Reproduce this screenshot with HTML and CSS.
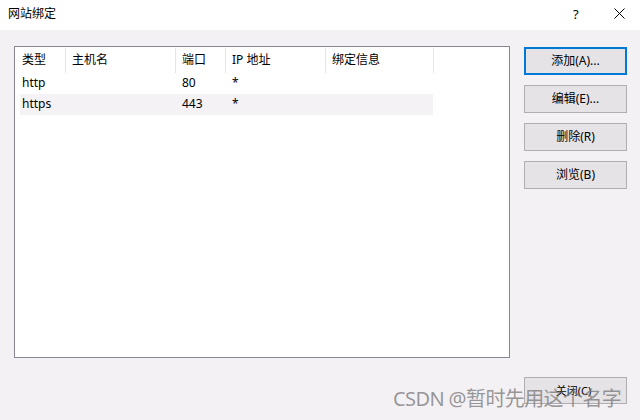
FILE: index.html
```html
<!DOCTYPE html>
<html lang="zh">
<head>
<meta charset="utf-8">
<title>网站绑定</title>
<link rel="stylesheet" href="styles.css">
</head>
<body>
<div class="dialog">
  <div class="titlebar">
    <span class="title">网站绑定</span>
    <span class="help">?</span>
    <span class="close-x">
      <svg width="11" height="11" viewBox="0 0 11 11"><path d="M0.5 0.5 L10.5 10.5 M10.5 0.5 L0.5 10.5" stroke="#000" stroke-width="1" fill="none"/></svg>
    </span>
  </div>
  <div class="content">
    <div class="main">
      <div class="listbox">
        <div class="header">
          <div class="hcell c1">类型</div>
          <div class="hcell c2">主机名</div>
          <div class="hcell c3">端口</div>
          <div class="hcell c4">IP 地址</div>
          <div class="hcell c5">绑定信息</div>
        </div>
        <div class="rows">
          <div class="row">
            <div class="cell r1">http</div>
            <div class="cell r2"></div>
            <div class="cell r3">80</div>
            <div class="cell r4">*</div>
            <div class="cell r5"></div>
          </div>
          <div class="row alt">
            <div class="cell r1">https</div>
            <div class="cell r2"></div>
            <div class="cell r3">443</div>
            <div class="cell r4">*</div>
            <div class="cell r5"></div>
          </div>
        </div>
      </div>
      <div class="buttons">
        <div class="btn default">添加(A)...</div>
        <div class="btn">编辑(E)...</div>
        <div class="btn">删除(R)</div>
        <div class="btn">浏览(B)</div>
      </div>
    </div>
    <div class="footer">
      <div class="btn small">关闭(C)</div>
    </div>
  </div>
  <div class="watermark">CSDN @暂时先用这个名字</div>
</div>
</body>
</html>
```

FILE: styles.css
```css
html, body {
  margin: 0;
  padding: 0;
}
body {
  width: 640px;
  height: 420px;
  overflow: hidden;
  background: #f4f1f4;
  font-family: "Noto Sans", "Noto Sans CJK SC", sans-serif;
  font-size: 12px;
  color: #000;
}
.dialog {
  position: relative;
  width: 640px;
  height: 420px;
}
.titlebar {
  height: 30px;
  background: #ffffff;
  display: flex;
  align-items: center;
}
.title {
  margin-left: 8px;
  flex: 1;
  line-height: 14px;
  margin-top: -2px;
}
.help {
  width: 10px;
  margin-right: 31px;
  font-size: 13px;
  margin-top: -2px;
}
.close-x {
  width: 11px;
  height: 11px;
  margin-right: 15px;
  margin-top: -4px;
  display: flex;
}
.content {
  padding: 16px 13px 0 14px;
}
.main {
  display: flex;
  gap: 14px;
}
.listbox {
  width: 494px;
  height: 310px;
  border: 1px solid #8a8691;
  background: #ffffff;
}
.header {
  display: flex;
  height: 25px;
  margin-top: 1px;
}
.hcell {
  box-sizing: border-box;
  height: 25px;
  line-height: 24px;
  padding-left: 6px;
  border-right: 1px solid #e4e4e4;
  white-space: nowrap;
}
.c1 { width: 51px; padding-left: 7px; }
.c2 { width: 110px; }
.c3 { width: 50px; }
.c4 { width: 100px; }
.c5 { width: 108px; }
.rows {
  margin-left: 5px;
}
.row {
  display: flex;
  height: 21px;
  width: 413px;
}
.row.alt {
  background: #f5f2f5;
}
.cell {
  box-sizing: border-box;
  line-height: 20px;
  padding-left: 6px;
  white-space: nowrap;
}
.r1 { width: 46px; padding-left: 2px; }
.r2 { width: 110px; }
.r3 { width: 50px; }
.r4 { width: 100px; }
.r5 { width: 107px; }
.buttons {
  display: flex;
  flex-direction: column;
  gap: 10px;
  margin-top: 1px;
}
.btn {
  box-sizing: border-box;
  width: 103px;
  height: 28px;
  border: 1px solid #b1adb3;
  background: #e6e3e7;
  display: flex;
  align-items: center;
  justify-content: center;
  line-height: 14px;
}
.btn.default {
  border: 2px solid #0078d7;
}
.footer {
  display: flex;
  justify-content: flex-end;
  margin-top: 19px;
}
.btn.small {
  height: 27px;
  font-size: 11px;
  padding-right: 4px;
}
.watermark {
  position: absolute;
  left: 393px;
  top: 387px;
  font-size: 20px;
  line-height: 24px;
  color: rgba(120, 120, 120, 0.75);
  white-space: nowrap;
  letter-spacing: -0.6px;
}
```
